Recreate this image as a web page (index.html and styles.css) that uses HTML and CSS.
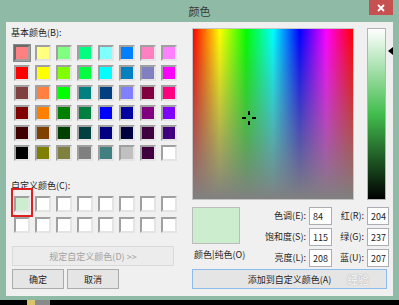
FILE: index.html
```html
<!DOCTYPE html>
<html lang="zh-CN">
<head>
  <meta charset="UTF-8" />
  <title>颜色</title>
  <link rel="stylesheet" href="styles.css">
</head>
<body>

  <div class="window">
    <!-- Title bar -->
    <div class="titlebar">
      <span></span>
      <span class="title">颜色</span>
      <span class="close">
        <svg width="8" height="8" viewBox="0 0 8 8"><path d="M1 1 L7 7 M7 1 L1 7" stroke="#fff" stroke-width="1.8"/></svg>
      </span>
    </div>

    <div class="client">
      <!-- Left: swatches -->
      <div class="left">
        <div class="label">基本颜色(B):</div>
        <div class="swatches">
          <div class="swatch selected" style="background:#ff8080"></div>
          <div class="swatch" style="background:#ffff80"></div>
          <div class="swatch" style="background:#80ff80"></div>
          <div class="swatch" style="background:#00ff80"></div>
          <div class="swatch" style="background:#80ffff"></div>
          <div class="swatch" style="background:#0080ff"></div>
          <div class="swatch" style="background:#ff80c0"></div>
          <div class="swatch" style="background:#ff80ff"></div>

          <div class="swatch" style="background:#ff0000"></div>
          <div class="swatch" style="background:#ffff00"></div>
          <div class="swatch" style="background:#80ff00"></div>
          <div class="swatch" style="background:#00ff40"></div>
          <div class="swatch" style="background:#00ffff"></div>
          <div class="swatch" style="background:#0080c0"></div>
          <div class="swatch" style="background:#8080c0"></div>
          <div class="swatch" style="background:#ff00ff"></div>

          <div class="swatch" style="background:#804040"></div>
          <div class="swatch" style="background:#ff8040"></div>
          <div class="swatch" style="background:#00ff00"></div>
          <div class="swatch" style="background:#008080"></div>
          <div class="swatch" style="background:#004080"></div>
          <div class="swatch" style="background:#8080ff"></div>
          <div class="swatch" style="background:#800040"></div>
          <div class="swatch" style="background:#ff0080"></div>

          <div class="swatch" style="background:#800000"></div>
          <div class="swatch" style="background:#ff8000"></div>
          <div class="swatch" style="background:#008000"></div>
          <div class="swatch" style="background:#008040"></div>
          <div class="swatch" style="background:#0000ff"></div>
          <div class="swatch" style="background:#0000a0"></div>
          <div class="swatch" style="background:#800080"></div>
          <div class="swatch" style="background:#8000ff"></div>

          <div class="swatch" style="background:#400000"></div>
          <div class="swatch" style="background:#804000"></div>
          <div class="swatch" style="background:#004000"></div>
          <div class="swatch" style="background:#004040"></div>
          <div class="swatch" style="background:#000080"></div>
          <div class="swatch" style="background:#000040"></div>
          <div class="swatch" style="background:#400040"></div>
          <div class="swatch" style="background:#400080"></div>

          <div class="swatch" style="background:#000000"></div>
          <div class="swatch" style="background:#808000"></div>
          <div class="swatch" style="background:#808040"></div>
          <div class="swatch" style="background:#808080"></div>
          <div class="swatch" style="background:#408080"></div>
          <div class="swatch" style="background:#c0c0c0"></div>
          <div class="swatch" style="background:#400040"></div>
          <div class="swatch" style="background:#ffffff"></div>
        </div>

        <div class="label label-custom">自定义颜色(C):</div>
        <div class="swatches custom">
          <div class="swatch" style="background:#cdedcf"></div>
          <div class="swatch"></div>
          <div class="swatch"></div>
          <div class="swatch"></div>
          <div class="swatch"></div>
          <div class="swatch"></div>
          <div class="swatch"></div>
          <div class="swatch"></div>
          <div class="swatch"></div>
          <div class="swatch"></div>
          <div class="swatch"></div>
          <div class="swatch"></div>
          <div class="swatch"></div>
          <div class="swatch"></div>
          <div class="swatch"></div>
          <div class="swatch"></div>
          <div class="marker"></div>
        </div>

        <button class="btn btn-define" disabled>规定自定义颜色(D) &gt;&gt;</button>
        <div class="actions">
          <button class="btn">确定</button>
          <button class="btn">取消</button>
        </div>
      </div>

      <!-- Right: picker -->
      <div class="right">
        <div class="picker">
          <div class="spectrum">
            <svg class="cross" width="14" height="14" viewBox="0 0 14 14">
              <rect x="6" y="0" width="2" height="4" fill="#000"/>
              <rect x="6" y="10" width="2" height="4" fill="#000"/>
              <rect x="0" y="6" width="4" height="2" fill="#000"/>
              <rect x="10" y="6" width="4" height="2" fill="#000"/>
            </svg>
          </div>
          <div class="lum"></div>
          <div class="arrow"></div>
        </div>

        <div class="info">
          <div class="preview-col">
            <div class="preview"></div>
            <div class="preview-label">颜色|纯色(O)</div>
          </div>
          <div class="fields">
            <label>色调(E):</label><input value="84">
            <label>红(R):</label><input value="204">
            <label>饱和度(S):</label><input value="115">
            <label>绿(G):</label><input value="237">
            <label>亮度(L):</label><input value="208">
            <label>蓝(U):</label><input value="207">
          </div>
        </div>

        <div class="add-wrap">
          <button class="btn btn-add">添加到自定义颜色(A)</button>
          <span class="watermark">经验</span>
        </div>
      </div>
    </div>
  </div>

  <div class="taskbar"><span class="task"></span></div>

</body>
</html>
```

FILE: styles.css
```css
* {
  box-sizing: border-box;
}

body {
  margin: 0;
  background: #000;
  font-family: "Noto Sans CJK SC", "Microsoft YaHei", sans-serif;
  font-size: 9px;
  color: #1e1e1e;
}

.window {
  width: 399px;
  height: 300px;
  background: #8fbaa6;
  padding: 0 6px 4px;
}

.titlebar {
  height: 22px;
  margin: 0 -6px;
  padding: 0 6px;
  display: grid;
  grid-template-columns: 1fr auto 1fr;
  align-items: start;
}

.title {
  line-height: 22px;
  font-size: 11px;
  color: #3a3a3a;
}

.close {
  justify-self: end;
  width: 24px;
  height: 15px;
  background: #c75050;
  display: flex;
  align-items: center;
  justify-content: center;
}

.client {
  height: 274px;
  background: #f0f0f0;
  display: flex;
}

.left {
  width: 186px;
  padding-top: 4px;
}

.label {
  height: 14px;
  line-height: 14px;
  margin-left: 5px;
  white-space: nowrap;
}

.label-custom {
  margin-top: 18px;
}

.swatches {
  display: grid;
  grid-template-columns: repeat(8, 16px);
  grid-auto-rows: 16px;
  column-gap: 5px;
  row-gap: 4px;
  margin: 5px 0 0 8px;
}

.swatches.custom {
  position: relative;
  row-gap: 5px;
  margin-top: 3px;
}

.swatch {
  background: #fff;
  border: 2px solid;
  border-color: #a0a0a0 #e4e4e4 #e4e4e4 #a0a0a0;
}

.swatch.selected {
  border-color: #6a6a6a #a0a0a0 #a0a0a0 #6a6a6a;
  box-shadow: 0 0 0 1px #8a8a8a;
}

.marker {
  position: absolute;
  left: -3px;
  top: -8px;
  width: 22px;
  height: 29px;
  border: 2px solid #e0201e;
}

.btn {
  font-family: inherit;
  font-size: 9px;
  color: #1e1e1e;
  background: #e5e5e5;
  border: 1px solid #acacac;
  padding: 0;
  height: 20px;
}

.btn-define {
  display: block;
  width: 162px;
  margin: 13px 0 0 6px;
  background: #ececec;
  border-color: #d9d9d9;
  color: #a2a2a2;
}

.actions {
  display: flex;
  gap: 3px;
  margin: 3px 0 0 6px;
}

.actions .btn {
  width: 52px;
}

.right {
  width: 201px;
  padding-top: 6px;
}

.picker {
  display: flex;
  height: 172px;
}

.spectrum {
  position: relative;
  width: 162px;
  border: 1px solid #c4c4c4;
  background:
    linear-gradient(to bottom, rgba(128, 128, 128, 0), #808080),
    linear-gradient(to right, #f00, #ff0, #0f0, #0ff, #00f, #f0f, #f00);
}

.cross {
  position: absolute;
  left: 49px;
  top: 82px;
}

.lum {
  width: 19px;
  margin-left: 13px;
  border: 1px solid #b4b4b4;
  background: linear-gradient(#fff, rgb(66, 189, 78), #000);
}

.arrow {
  margin: 19px 0 0 2px;
  width: 0;
  height: 0;
  border-right: 5px solid #000;
  border-top: 4px solid transparent;
  border-bottom: 4px solid transparent;
}

.info {
  display: flex;
  margin-top: 7px;
}

.preview-col {
  width: 48px;
}

.preview {
  height: 37px;
  background: #cdedcf;
  border: 1px solid #bcbcbc;
}

.preview-label {
  margin: 4px 0 0 2px;
  line-height: 14px;
  white-space: nowrap;
}

.fields {
  display: grid;
  grid-template-columns: 66px 23px 29px 22px;
  grid-auto-rows: 18px;
  gap: 3px;
}

.fields label {
  text-align: right;
  line-height: 18px;
  white-space: nowrap;
}

.fields input {
  width: 100%;
  height: 100%;
  border: 1px solid #abadb3;
  background: #fff;
  font-family: inherit;
  font-size: 9px;
  color: #1e1e1e;
  padding: 0 0 0 3px;
}

.add-wrap {
  position: relative;
  margin-top: 2px;
}

.btn-add {
  display: block;
  width: 195px;
  border-color: #8cbcec;
}

.watermark {
  position: absolute;
  left: 155px;
  top: 2px;
  font-size: 11px;
  font-weight: bold;
  color: rgba(255, 255, 255, 0.85);
  text-shadow: 0 0 1px rgba(140, 140, 140, 0.9);
}

.taskbar {
  height: 5px;
  display: flex;
}

.task {
  margin-left: 27px;
  width: 23px;
  background: linear-gradient(to right, #d8c46a 0 35%, #8a8a8a 35%);
}
```
